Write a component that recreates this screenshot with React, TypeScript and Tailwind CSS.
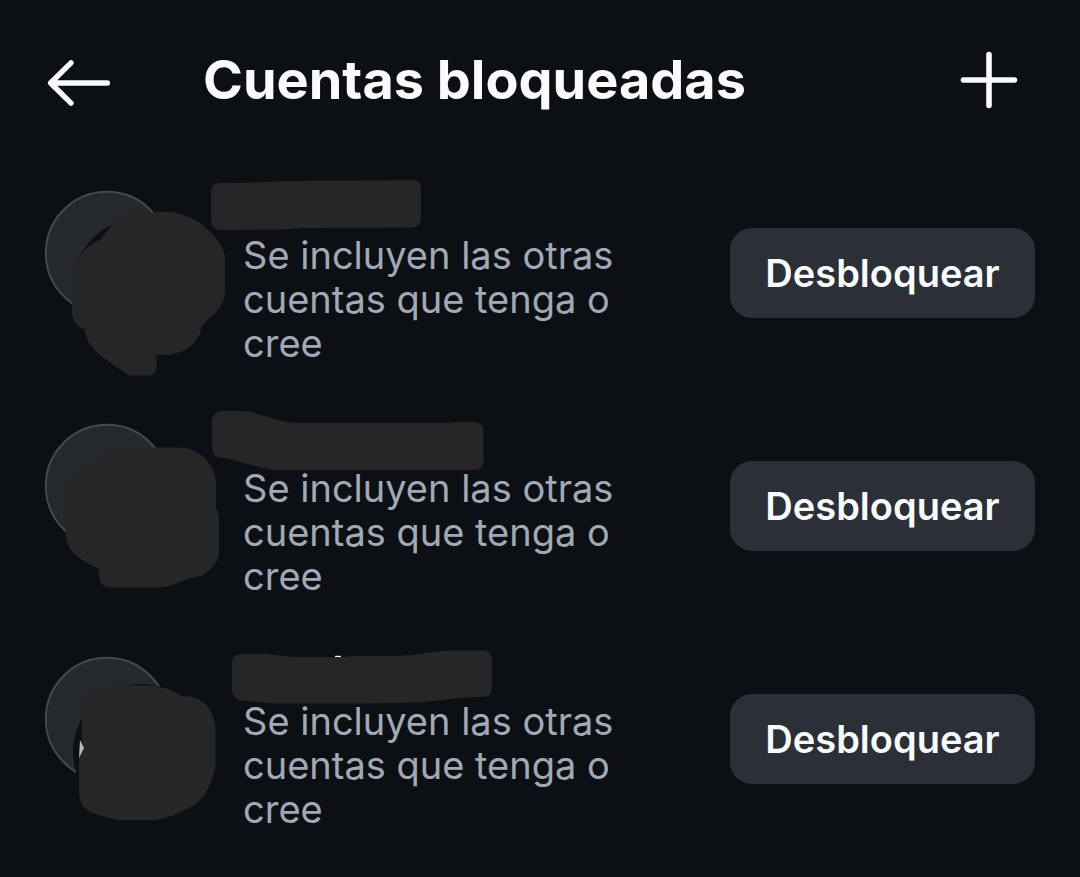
type Account = {
  id: string;
  viewBox: string;
  centerY: number;
  photo: string;
  name: string;
  hint?: { photo: string; name: string };
};

const accounts: Account[] = [
  {
    id: "a1",
    viewBox: "0 157 500 233",
    centerY: 253,
    photo:
      "M72 270V312C72 321 78 327 85 330C86 342 93 349 101 356L125 373Q128 375.500 131 375.500H149Q156.500 375 156.500 366V355H168C186 353 199 342 201 329C203 323 206 322 210 318C218 311 225 302 225 292V255C221 243 212 233 205 227C193 217 178 212 168 212H137C125 212 116 219 110 227L101 239C92 244 88 246 84 251L76 263Q72 266 72 270Z",
    name: "M211 192Q211 183 220 183L257 182.500L287 181L388 180.500L394 179.700H412Q421 179.700 421 189V219Q421 227.500 411 227.500L307 228L277 229.700L221 230Q211 230 211 219Z",
  },
  {
    id: "a2",
    viewBox: "0 390 500 233",
    centerY: 486,
    photo:
      "M65.500 497V533C66 543 70 551 77 556Q84 562 99 569V577Q100 587 111 587.500H160C170 587 180 582 190 578C194 577 198 577 201 576C212 570 219 561 219 552V517Q219 513 216 508V484C216 465 200 447.500 179 447.500H140C122 448 104 454 90 465C78 474 66 486 65.500 497Z",
    name: "M212 420Q213 411 222 411H245Q249 411 254 413L278 420Q287 423 297 423H450L456 422H474Q483.500 422 483.500 432V460Q483.500 470 474 470H275Q266 469 255 466L225 458L220 457.500Q212 457 212 447Z",
  },
  {
    id: "a3",
    viewBox: "0 623 500 233",
    centerY: 719,
    photo:
      "M82 706V741L83 748L79 757V795Q80 806 90 812Q103 817 118 820H157Q178 816 197 803Q207 795 213 776L215.500 765V728Q213 709 203 702Q194 696 187 696.500Q182 697 176 693Q166 686 147 685.500H123Q105 686 90 696Q83 700 82 706Z",
    name: "M232 664Q232 654 241 654H268L293 657H345L352 656H395L413 655L440 651Q446 650.500 452 650.500H484Q492 651 492 661V687Q492 697 483 697L465 697.500L420 702.500L365 703.500H275L241 700.500Q232 699 232 689Z",
    hint: { photo: "M80 740L84 748L79 758Z", name: "M335 655.800H341V657.200H335Z" },
  },
];

function AvatarArt({ account }: { account: Account }) {
  const { id, viewBox, centerY, photo, name, hint } = account;
  return (
    <svg
      aria-hidden="true"
      viewBox={viewBox}
      className="pointer-events-none absolute top-0 left-0 h-[233px] w-[500px]"
    >
      <defs>
        <mask id={`cut-${id}`}>
          <rect x="0" y={centerY - 96} width="500" height="233" fill="white" />
          <circle cx="141" cy={centerY + 33} r="68" fill="black" />
        </mask>
      </defs>
      <circle
        cx="107"
        cy={centerY}
        r="61.2"
        fill="#25282d"
        stroke="#46494e"
        strokeWidth="1.9"
        mask={`url(#cut-${id})`}
      />
      {hint && <path d={hint.name} fill="#f9fafb" />}
      <path d={photo} fill="#262626" />
      {hint && <path d={hint.photo} fill="#b9babb" />}
      <path d={name} fill="#262626" />
    </svg>
  );
}

function AccountRow({ account }: { account: Account }) {
  return (
    <li className="relative flex h-[233px] items-center px-[45px] pb-[2px]">
      <AvatarArt account={account} />
      <p className="mt-[52px] mr-20 ml-[198px] flex-1 text-[38px] leading-[44px] text-[#a2a9b4]">
        Se incluyen las otras cuentas que tenga o cree
      </p>
      <button
        type="button"
        className="h-[90px] w-[305px] shrink-0 rounded-[22px] bg-[#2b2f37] text-[38px] leading-[44px] font-semibold text-[#f9fafb]"
      >
        Desbloquear
      </button>
    </li>
  );
}

export default function App() {
  return (
    <main className="min-h-screen bg-[#0c0f14] font-['Inter','Liberation_Sans',sans-serif]">
      <header className="flex items-center px-[45px] pt-12 pb-[45px]">
        <button type="button" aria-label="Volver" className="shrink-0">
          <svg
            viewBox="0 0 68 64"
            className="h-16 w-[68px]"
            fill="none"
            stroke="#f9fafb"
            strokeWidth="5.4"
            strokeLinecap="round"
            strokeLinejoin="round"
          >
            <path d="M62.400 35H6M26 14.800L5.600 35L26 55.200" />
          </svg>
        </button>
        <h1 className="ml-[90px] flex-1 text-[54px] leading-[64px] font-bold text-[#f9fafb]">
          Cuentas bloqueadas
        </h1>
        <button type="button" aria-label="Añadir cuenta" className="mr-[14px] shrink-0">
          <svg
            viewBox="0 0 64 64"
            className="size-16"
            fill="none"
            stroke="#f9fafb"
            strokeWidth="5.6"
            strokeLinecap="round"
          >
            <path d="M32 6.500V57.500M6.500 32H57.500" />
          </svg>
        </button>
      </header>
      <ul>
        {accounts.map((account) => (
          <AccountRow key={account.id} account={account} />
        ))}
      </ul>
    </main>
  );
}
